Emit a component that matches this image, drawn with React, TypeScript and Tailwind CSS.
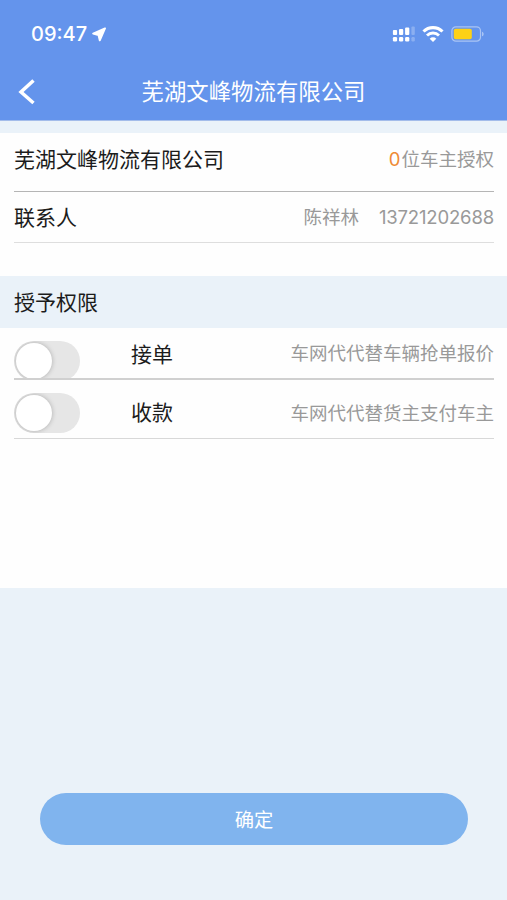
import { useState } from "react";

function LocationArrow() {
  return (
    <svg className="ml-[5px] w-[15px] h-[15px]" viewBox="0 0 15 15">
      <path
        d="M13 1.400 1.200 6.600l5.300 1.500 1.300 5.300Z"
        fill="#fff"
        stroke="#fff"
        strokeWidth="1.900"
        strokeLinejoin="round"
      />
    </svg>
  );
}

function SignalIcon() {
  return (
    <svg className="w-6 h-4" viewBox="0 0 24 16" fill="#fff">
      <rect x="0.9" y="4" width="4.2" height="5" rx="1" />
      <rect x="7" y="3" width="4.2" height="6" rx="1" />
      <rect x="13.1" y="1.500" width="4.2" height="7.500" rx="1" />
      <rect x="19.4" y="0.500" width="3.4" height="8.500" rx="1" opacity="0.25" />
      <rect x="0.9" y="11" width="4.2" height="4.500" rx="1.200" />
      <rect x="7" y="11" width="4.2" height="4.500" rx="1.200" />
      <rect x="13.1" y="11" width="4.2" height="4.500" rx="1.200" />
      <rect x="19.4" y="11" width="3.4" height="4.500" rx="1.200" opacity="0.25" />
    </svg>
  );
}

function WifiIcon() {
  return (
    <svg className="ml-1.5 w-[22px] h-4" viewBox="0 0 22 16" fill="none">
      <path d="M1.5 5.5a13.6 13.6 0 0 1 19 0" stroke="#fff" strokeWidth="3.1" />
      <path d="M5 9.500a8.6 8.6 0 0 1 12 0" stroke="#fff" strokeWidth="2.9" />
      <path d="M11 16 7.700 12.700a4.700 4.700 0 0 1 6.600 0Z" fill="#fff" />
    </svg>
  );
}

function BatteryIcon() {
  return (
    <svg className="ml-[7px] w-[34px] h-4" viewBox="0 0 34 16">
      <rect
        x="0.9"
        y="0.8"
        width="28.6"
        height="14.4"
        rx="4"
        fill="none"
        stroke="#a9c4f4"
        strokeWidth="1.2"
      />
      <rect x="2.8" y="2.8" width="18" height="10.4" rx="1.8" fill="#fdd116" />
      <path d="M31 5.7c2.2.6 2.2 4 0 4.6Z" fill="#a9c4f4" />
    </svg>
  );
}

function Switch({ label }: { label: string }) {
  const [on, setOn] = useState(false);

  return (
    <button
      role="switch"
      aria-checked={on}
      aria-label={label}
      onClick={() => setOn(!on)}
      className={`w-[66px] h-10 shrink-0 rounded-full flex items-center px-[1.500px] overflow-hidden ${
        on ? "bg-[#6495ed] justify-end" : "bg-[#e6e6e6] justify-start"
      }`}
    >
      <span className="block w-9 h-9 rounded-full bg-white shadow-[0_0_5px_rgba(0,0,0,0.25)]" />
    </button>
  );
}

function App() {
  return (
    <div className="flex flex-col w-full h-[900px] bg-[#eaf2f9] text-[21px] leading-[30px] text-[#1c1c1c] font-['Inter','Noto_Sans_CJK_SC',sans-serif]">
      <header className="h-[121px] shrink-0 bg-[#6494ec] border-b border-[#a3bcea] text-white">
        <div className="flex items-center h-[68px] pl-[31px] pr-[22px]">
          <span className="text-[20px] font-medium">09:47</span>
          <LocationArrow />
          <div className="flex items-center ml-auto">
            <SignalIcon />
            <WifiIcon />
            <BatteryIcon />
          </div>
        </div>
        <div className="grid grid-cols-[60px_1fr_60px] items-center h-12">
          <button aria-label="返回" className="pl-[18px]">
            <svg className="w-[18px] h-[26px]" viewBox="0 0 18 26" fill="none">
              <path d="M15.5 1.500 3 13l12.500 11" stroke="#fff" strokeWidth="3.5" />
            </svg>
          </button>
          <h1 className="text-center text-[22.400px] font-normal">
            芜湖文峰物流有限公司
          </h1>
        </div>
      </header>

      <section className="mt-3 h-[143px] shrink-0 bg-[#fefefe] pl-3.5 pr-[13px]">
        <div className="flex justify-between items-center h-[59px] pb-1 border-b border-[#b5b5b5]">
          <span>芜湖文峰物流有限公司</span>
          <span className="pb-0.5 text-[18.500px] text-[#999]">
            <span className="mr-px text-[#ee8a35]">0</span>位车主授权
          </span>
        </div>
        <div className="flex justify-between items-center h-[51px] pt-0.5 border-b border-[#dedede]">
          <span>联系人</span>
          <span className="flex gap-5 pb-0.5 text-[18.500px] text-[#999]">
            <span>陈祥林</span>
            <span className="tracking-[-0.160px]">13721202688</span>
          </span>
        </div>
      </section>

      <h2 className="h-[52px] shrink-0 pt-0.5 px-3.5 flex items-center">
        授予权限
      </h2>

      <section className="h-[260px] shrink-0 bg-[#fefefe] pl-3.5 pr-[13px]">
        <div className="flex items-start h-[52px] border-b-2 border-[#d0d0d0] overflow-hidden">
          <div className="pt-[13px]">
            <Switch label="接单" />
          </div>
          <span className="ml-[51px] mt-3">接单</span>
          <span className="ml-auto mt-2.5 text-[18.500px] text-[#999]">
            车网代代替车辆抢单报价
          </span>
        </div>
        <div className="flex items-start h-[59px] pt-[13px] border-b border-[#d8d8d8]">
          <Switch label="收款" />
          <span className="ml-[51px] mt-[5px]">收款</span>
          <span className="ml-auto mt-[5px] text-[18.500px] text-[#999]">
            车网代代替货主支付车主
          </span>
        </div>
      </section>

      <button className="mt-[205px] ml-10 mr-[39px] h-[52px] shrink-0 pt-px rounded-full bg-[#80b4ee] text-[19.300px] text-white">
        确定
      </button>
    </div>
  );
}

export default App;
